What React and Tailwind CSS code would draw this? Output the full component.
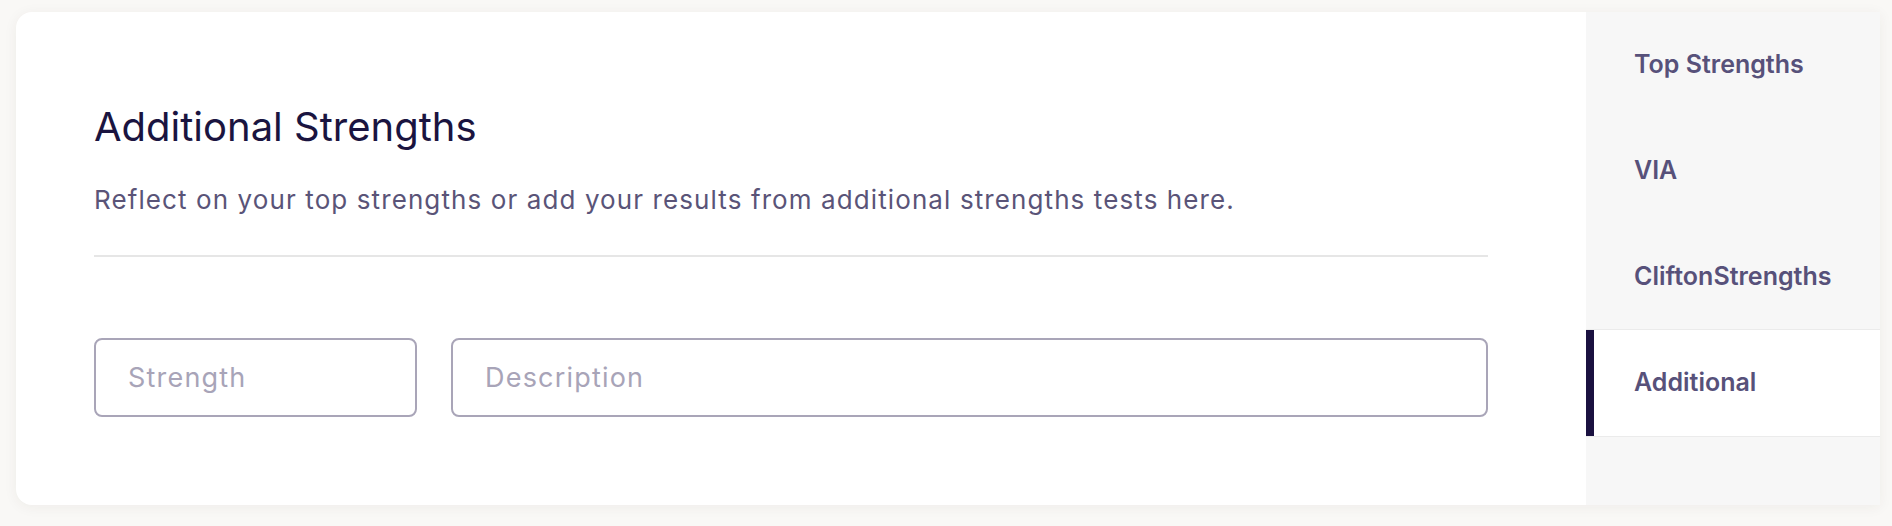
import React from "react";

const tabs = ["Top Strengths", "VIA", "CliftonStrengths", "Additional"];

const App = () => {
  const active = "Additional";

  return (
    <div
      className="min-h-screen bg-[#f9f8f6] pt-[12px] pb-[21px] pl-[16px] pr-[12px]"
      style={{ fontFamily: "Inter, 'Noto Sans', sans-serif" }}
    >
      <div className="flex h-[493px] bg-white rounded-l-2xl shadow-[0_2px_14px_rgba(60,50,40,0.06)] overflow-hidden">
        <div className="flex-1 pl-[78px] pr-[98px] pt-[92px]">
          <h1 className="text-[40px] leading-[46px] text-[#1a1440]">
            Additional Strengths
          </h1>
          <p className="mt-[33px] text-[26px] leading-[34px] tracking-[1.1px] text-[#5a5478]">
            Reflect on your top strengths or add your results from additional strengths tests here.
          </p>
          <div className="mt-[38px] h-[2px] bg-[#e6e6e6]" />
          <div className="mt-[81px] flex gap-[34px]">
            <input
              type="text"
              placeholder="Strength"
              className="w-[323px] h-[79px] border-2 border-[#a9a5b8] rounded-lg px-[32px] text-[27px] tracking-[1.2px] text-[#1a1440] placeholder:text-[#a8a4b8] outline-none"
            />
            <input
              type="text"
              placeholder="Description"
              className="flex-1 h-[79px] border-2 border-[#a9a5b8] rounded-lg px-[32px] text-[27px] tracking-[1.2px] text-[#1a1440] placeholder:text-[#a8a4b8] outline-none"
            />
          </div>
        </div>

        <nav className="w-[294px] bg-[#f7f7f7] flex flex-col">
          {tabs.map((tab) => (
            <div
              key={tab}
              className={
                tab === active
                  ? "h-[106px] flex items-center pl-[40px] bg-white border-l-[8px] border-[#1a1140] shadow-[0_1px_0_#ebebeb,0_-1px_0_#ebebeb]"
                  : "h-[106px] flex items-center pl-[48px]"
              }
            >
              <span className="text-[25px] font-semibold text-[#57517a]">{tab}</span>
            </div>
          ))}
        </nav>
      </div>
    </div>
  );
};

export default App;
